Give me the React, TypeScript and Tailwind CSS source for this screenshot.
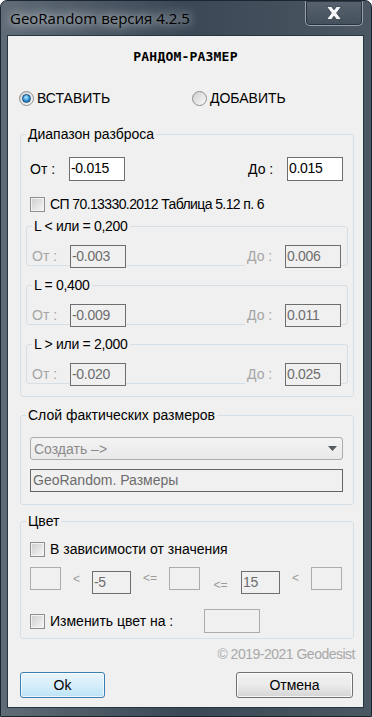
const sans = "font-['Liberation_Sans',Arial,sans-serif]";

function Radio({ on }: { on?: boolean }) {
  return (
    <span className="w-[15px] h-[15px] rounded-full border border-[#8e8f8f] bg-linear-to-br from-[#cfcfcf] to-[#fbfbfb] flex items-center justify-center shrink-0">
      {on && (
        <span className="w-[9px] h-[9px] rounded-full border border-[#1a4f80] bg-[radial-gradient(circle_at_45%_35%,#b8ecff_0%,#3ea2e4_45%,#0f4b85_100%)]" />
      )}
    </span>
  );
}

function Check() {
  return (
    <span className="w-[15px] h-[15px] border border-[#8e8f8f] bg-linear-to-br from-[#cdcdcd] to-[#f7f7f7] shadow-[inset_0_0_0_1px_#f2f2f2] shrink-0" />
  );
}

function Field({
  value,
  w,
  h = 24,
  dim,
}: {
  value: string;
  w: string;
  h?: number;
  dim?: boolean;
}) {
  return (
    <div
      className={`${w} ${h === 24 ? "h-[24px]" : "h-[23px]"} border ${
        dim ? "border-[#6e6e6e] bg-[#f0f0f0] text-[#6d6d6d]" : "border-[#6e6e6e] bg-white text-black"
      } pl-[1px] pt-[1px] text-[14px] leading-[18px] tracking-[-0.3px] shrink-0`}
    >
      {value}
    </div>
  );
}

function EmptyBox({ w = "w-[31px]" }: { w?: string }) {
  return <div className={`${w} h-[23px] border border-[#acacac] bg-[#f0f0f0] shrink-0`} />;
}

function SubGroup({ title, from, to }: { title: string; from: string; to: string }) {
  return (
    <fieldset className="border border-[#d5dfe5] rounded-[3px] px-[5px] w-[322px]">
      <legend className="px-[2px] leading-[16px] text-[14px] text-black tracking-[-0.3px]">{title}</legend>
      <div className="flex items-center mt-[11px] mb-[-3px] h-[23px]">
        <span className="w-[38px] text-[#a6a6a6]">От :</span>
        <Field value={from} w="w-[56px]" h={23} dim />
        <span className="flex-1" />
        <span className="w-[40px] h-[23px] pl-[2px] flex items-center bg-[#f0f0f0] text-[#a6a6a6]">До :</span>
        <Field value={to} w="w-[56px]" h={23} dim />
        <span className="w-[1px]" />
      </div>
    </fieldset>
  );
}

export default function App() {
  return (
    <div className={`w-[372px] h-[717px] rounded-t-[7px] bg-linear-to-r from-[#5f6b76] via-[#3a4855] to-[#4b5863] border border-[#1c2630] flex flex-col overflow-hidden ${sans}`}>
      {/* title bar */}
      <div className="h-[35px] flex items-start shrink-0">
        <span className="ml-[9px] mt-[8px] text-[15px] leading-[19px] text-black font-['Open_Sans',sans-serif] [text-shadow:0_0_8px_rgba(255,255,255,0.9),0_0_16px_rgba(255,255,255,0.6)]">
          GeoRandom версия 4.2.5
        </span>
        <div className="ml-auto mr-[8px] w-[58px] h-[25px] border border-t-0 border-[#97a2ab] rounded-b-[5px] bg-linear-to-b from-[#56626d] to-[#44515c] shadow-[inset_0_0_0_1px_rgba(20,30,40,0.6)] flex items-center justify-center">
          <svg width="16" height="14" viewBox="0 0 16 14">
            <path
              d="M0.5 0.5 L5.5 0.5 L8 3.8 L10.5 0.5 L15.5 0.5 L10.6 7 L15.5 13.5 L10.5 13.5 L8 10.2 L5.5 13.5 L0.5 13.5 L5.4 7 Z"
              fill="#f4f6f8"
              stroke="#2d3944"
              strokeWidth="0.8"
            />
          </svg>
        </div>
      </div>

      {/* client area */}
      <div className="ml-[7px] w-[355px] h-[671px] bg-[#f0f0f0] shadow-[0_0_0_1px_#28343f] flex flex-col text-[14px] text-black">
        <div className="mt-[14px] h-[14px] leading-[14px] text-center text-[13px] font-bold font-['DejaVu_Sans_Mono',monospace] tracking-[0.2px]">
          РАНДОМ-РАЗМЕР
        </div>

        <div className="mt-[26px] h-[16px] flex items-center ml-[11px]">
          <label className="w-[173px] flex items-center gap-[3px]">
            <Radio on />
            <span className="leading-[16px]">ВСТАВИТЬ</span>
          </label>
          <label className="flex items-center gap-[3px]">
            <Radio />
            <span className="leading-[16px]">ДОБАВИТЬ</span>
          </label>
        </div>

        {/* Диапазон разброса */}
        <fieldset className="mt-[20px] ml-[12px] w-[334px] border border-[#d5dfe5] rounded-[3px] px-[5px] pb-[12px]">
          <legend className="px-[2px] leading-[16px]">Диапазон разброса</legend>
          <div className="mt-[15px] h-[24px] flex items-center">
            <span className="pl-[4px] w-[43px]">От :</span>
            <Field value="-0.015" w="w-[56px]" />
            <span className="flex-1" />
            <span className="w-[39px]">До :</span>
            <Field value="0.015" w="w-[56px]" />
            <span className="w-[5px]" />
          </div>
          <div className="mt-[15px] h-[16px] flex items-center gap-[5px] pl-[4px]">
            <Check />
            <span className="leading-[16px] tracking-[-0.6px]">СП 70.13330.2012 Таблица 5.12 п. 6</span>
          </div>
          <div className="mt-[6px] flex flex-col gap-[11px]">
            <SubGroup title="L < или = 0,200" from="-0.003" to="0.006" />
            <SubGroup title="L = 0,400" from="-0.009" to="0.011" />
            <SubGroup title="L > или = 2,000" from="-0.020" to="0.025" />
          </div>
        </fieldset>

        {/* Слой фактических размеров */}
        <fieldset className="mt-[10px] ml-[12px] w-[334px] border border-[#d5dfe5] rounded-[3px] px-[5px] pb-[12px]">
          <legend className="px-[2px] leading-[16px]">Слой фактических размеров</legend>
          <div className="mt-[14px] ml-[4px] w-[313px] h-[23px] border border-[#acacac] rounded-[3px] bg-linear-to-b from-[#f3f3f3] to-[#e9e9e9] flex items-center pl-[3px] pr-[5px] text-[#8a8a8a]">
            <span className="flex-1 leading-[16px]">Создать –&gt;</span>
            <svg width="9" height="5" viewBox="0 0 9 5">
              <path d="M0 0 H9 L4.5 5 Z" fill="#555a5e" />
            </svg>
          </div>
          <div className="mt-[9px] ml-[4px] w-[313px] h-[23px] border border-[#646464] bg-[#f0f0f0] pl-[2px] pt-[1px] leading-[18px] text-[#6d6d6d]">
            GeoRandom. Размеры
          </div>
        </fieldset>

        {/* Цвет */}
        <fieldset className="mt-[8px] ml-[12px] w-[334px] border border-[#d5dfe5] rounded-[3px] px-[5px] pb-[5px]">
          <legend className="px-[2px] leading-[16px]">Цвет</legend>
          <div className="mt-[12px] h-[16px] flex items-center gap-[5px] pl-[4px]">
            <Check />
            <span className="leading-[16px]">В зависимости от значения</span>
          </div>
          <div className="mt-[10px] h-[27px] flex items-start pl-[4px] text-[12px] text-[#9a9a9a]">
            <EmptyBox />
            <span className="w-[31px] text-center pt-[5px] leading-[14px]">&lt;</span>
            <div className="mt-[4px]">
              <Field value="-5" w="w-[39px]" h={23} dim />
            </div>
            <span className="w-[38px] text-center pt-[4px] leading-[14px]">&lt;=</span>
            <EmptyBox />
            <span className="w-[41px] text-center pt-[11px] leading-[14px]">&lt;=</span>
            <div className="mt-[4px]">
              <Field value="15" w="w-[39px]" h={23} dim />
            </div>
            <span className="w-[31px] text-center pt-[4px] leading-[14px]">&lt;</span>
            <EmptyBox />
          </div>
          <div className="mt-[15px] h-[24px] flex items-center pl-[4px]">
            <Check />
            <span className="ml-[5px] w-[154px] leading-[16px]">Изменить цвет на :</span>
            <div className="w-[56px] h-[24px] border border-[#acacac] bg-[#f0f0f0]" />
          </div>
        </fieldset>

        <div className="mt-[7px] h-[16px] leading-[16px] text-right pr-[8px] text-[#a8a8a8] tracking-[-0.5px]">
          © 2019-2021 Geodesist
        </div>

        <div className="mt-[10px] flex items-center">
          <button className="ml-[12px] w-[85px] h-[26px] rounded-[3px] border border-[#3c7fb1] bg-linear-to-b from-[#e9f6fd] via-[#d6eefb] to-[#bde3f6] shadow-[inset_0_0_0_1px_rgba(255,255,255,0.7)] text-[14px] text-black">
            Ok
          </button>
          <span className="flex-1" />
          <button className="mr-[10px] w-[117px] h-[26px] rounded-[3px] border border-[#707070] bg-linear-to-b from-[#f2f2f2] via-[#ebebeb] to-[#d4d4d4] shadow-[inset_0_0_0_1px_rgba(255,255,255,0.8)] text-[14px] text-black">
            Отмена
          </button>
        </div>
      </div>
    </div>
  );
}
